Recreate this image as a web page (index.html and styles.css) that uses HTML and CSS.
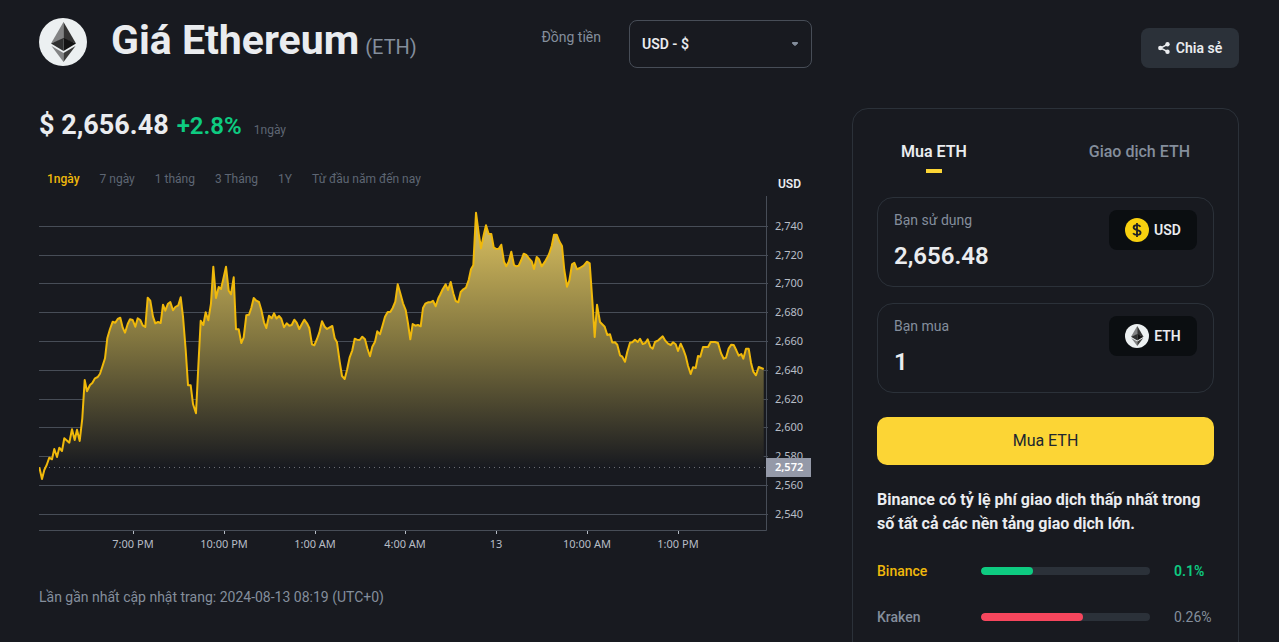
FILE: index.html
```html
<!DOCTYPE html>
<html lang="vi">
<head>
<meta charset="utf-8">
<meta name="viewport" content="width=device-width, initial-scale=1">
<title>Giá Ethereum (ETH)</title>
<link rel="stylesheet" href="styles.css">
</head>
<body>
<svg class="defs" width="0" height="0" aria-hidden="true">
  <symbol id="eth" viewBox="0 0 48 48">
    <circle cx="24" cy="24" r="24" fill="#ecf0f1"/>
    <path d="M24.5 4v17L12 25.5z" fill="#828384"/>
    <path d="M24.5 4v17L37 25.5z" fill="#343434"/>
    <path d="M24.5 20v13L12 25.5z" fill="#2f3030"/>
    <path d="M24.5 20v13L37 25.5z" fill="#131313"/>
    <path d="M12.5 28l12 16v-9z" fill="#828384"/>
    <path d="M36.500 28l-12 16v-9z" fill="#3c3c3b"/>
  </symbol>
</svg>
<div class="page">
  <header class="top">
    <div class="top-main">
      <svg class="logo" aria-hidden="true"><use href="#eth"/></svg>
      <h1 class="title">Giá Ethereum<span class="ticker">(ETH)</span></h1>
      <div class="currency">
        <label class="currency-label" for="currency">Đồng tiền</label>
        <div class="select-wrap">
          <select class="select" id="currency"><option>USD - $</option></select>
          <svg class="caret" viewBox="0 0 8 6" aria-hidden="true"><path d="M1.500 1.500h5v1L4 4.500l-2.500-2z" fill="#848e9c" stroke="#848e9c" stroke-linejoin="round"/></svg>
        </div>
      </div>
    </div>
    <button class="share" type="button">
      <svg class="share-icon" viewBox="0 0 12 12" aria-hidden="true">
        <path d="M9.500 2.300L2.500 6l7 3.700" fill="none" stroke="#eaecef" stroke-width="1.500"/>
        <circle cx="9.500" cy="2.300" r="2.200" fill="#eaecef"/><circle cx="2.300" cy="6" r="2.200" fill="#eaecef"/><circle cx="9.500" cy="9.700" r="2.200" fill="#eaecef"/>
      </svg>
      Chia sẻ
    </button>
  </header>

  <div class="columns">
    <main class="market">
      <div class="price-row">
        <span class="price">$ 2,656.48</span>
        <span class="change">+2.8%</span>
        <span class="period">1ngày</span>
      </div>
      <div class="range-row">
        <nav class="ranges">
          <button class="range active" type="button">1ngày</button>
          <button class="range" type="button">7 ngày</button>
          <button class="range" type="button">1 tháng</button>
          <button class="range" type="button">3 Tháng</button>
          <button class="range" type="button">1Y</button>
          <button class="range" type="button">Từ đầu năm đến nay</button>
        </nav>
        <span class="unit">USD</span>
      </div>
      <svg class="chart" viewBox="39 196 773 360" role="img" aria-label="Giá Ethereum trong 1 ngày">
        <defs>
          <linearGradient id="fill" gradientUnits="userSpaceOnUse" x1="0" y1="212" x2="0" y2="467">
            <stop offset="0" stop-color="#e0c562"/><stop offset="0.500" stop-color="#81753f"/><stop offset="1" stop-color="#181a20"/>
          </linearGradient>
        </defs>
        <path class="grid" d="M39 226.500H768M39 255.500H768M39 283.500H768M39 312.500H768M39 341.500H768M39 370.500H768M39 399.500H768M39 427.500H768M39 456.500H768M39 485.500H768M39 514.500H768M39 530.500H766.500V196"/>
        <path id="area" fill="url(#fill)"/>
        <path class="base" d="M39 467.500H766"/>
        <path id="line" class="line" d="M39.300 467.300L42 479 44.300 470 46.700 465 49.300 457.700 52 459.300 54.300 449 57 457 59.300 447.700 62 451 64.300 438.300 69.300 442.700 72 429.300 74.700 440 77 429.700 79.700 441 82.300 418.300 84.700 380 87 391.300 90 385 92.300 383 95 378.300 97.700 377 100 373.700 102.300 366.700 105 358.300 107.300 338.300 110 329 112.700 321.700 115.300 322.700 117.700 319 120.300 317.700 122.700 327.700 125 332.700 127.700 324 130 319.300 132.700 320 135.300 326.700 137.700 318.300 140.300 320 142.700 325.300 145.300 327 147.700 297.700 150.300 300.700 153 316.700 155.300 323.300 158 322 160.700 323 163 304.700 165.300 310.700 168 303.700 170.300 302 173 310.300 175.300 307 178.300 305.300 180.700 297.300 183 316.700 185.700 350 188 385.300 190.700 385.300 193 404 196 413.300 198.300 366.700 200.700 320.700 203.300 325 205.700 312.300 208.300 320.300 211 303.300 213.300 266.700 216 298 218.700 287 221 289 223.300 279 226 266.700 228.700 290.700 231 294.300 233.700 277.300 236 329.300 238.700 329.300 241.300 343 243.700 337.300 246.300 315.300 249 314.700 251.300 308 253.700 298 256.300 300.700 259 302 261.300 309.700 264 322.300 266.300 328 269 315.700 271.700 318.300 274 313.300 276.500 318.500 279 316 281.300 318.700 284 327.300 286.700 323.300 289.300 325.700 291.700 325 294.300 319.700 296.700 322.700 299.300 329 302 323.700 304.300 319.700 307 323.300 309.300 328 312 344.300 314.300 345.300 317 339 319.300 332.700 322 321.300 324.700 326.700 327 329 329.700 327.300 332.300 326 334.700 338.300 337 342.300 339.700 361.700 342 376 344.700 379 347 370 349.700 357.300 352.300 350.300 354.700 338.700 357 339.700 359.700 340 362.300 336.700 365 339.300 367.300 348.300 370 356.300 372.300 346.700 375 341.700 377.300 331.300 380 334.300 382.700 325 385 316.700 387.700 312 390.300 312 392.700 308 395.300 301.700 397.700 284.300 400.300 293.300 403 303.300 405.700 310 408 323.300 410.300 339.300 412.700 324 415.300 325.700 418 325 420.700 326.300 423 308 425.300 303.700 428 302.300 430.700 302.300 433 300.700 435.700 306.300 438.300 298.300 440 295 442.700 289.300 445.700 284.300 448 290 450.700 282 453.300 293.300 455.700 301 458.300 302.300 460.700 292 463.300 289.300 466 287.700 468.700 280 471 269.300 473.300 265.300 476 212.700 478.700 233.300 481 248.300 483.700 235 486 225.300 488.700 234 491.300 234 493.700 247.300 496.300 249 498.700 248.700 501.300 244.700 504 261.700 506.300 266.300 508.700 261.700 511.300 251.700 514 265 516.300 266.300 518.700 265.700 521.300 260 523.700 253.700 526.300 255 529 258.300 531.700 261.300 534 269 536.700 257 539 259.300 541.700 266.300 545 261.700 549 254.300 551.700 246 554 234.700 556.700 234.700 559.300 241.300 562 246 564.300 270 567 286.700 569.300 280.700 572 264.300 574.300 262.700 577 269.300 579.700 268 583.700 265.700 587 261.700 589.700 263.300 592.300 300 594.700 337 597 304.700 600 322 604.700 326.700 607.300 335 610 334.300 612.300 342.500 615 342.300 617.300 344.700 620 355.300 622.300 356.700 625 361.700 627.300 351.700 630 342.700 632.300 342.300 635 339.700 637.700 342 640 338.700 642.700 344 645.300 343 647.700 339.300 650.300 346.700 652.700 348.700 655 342 658.300 340.300 662.700 336.300 665.300 340.700 668 343.700 670.700 345 673 342.300 675.700 344.300 678 351 680.700 343.700 683.300 349.300 685.700 356 688 365.700 690.700 374 693 367.300 695.700 368 698 356 700.300 356.700 703 347 708 347 710.700 342 715 342 718 343 721 353.300 723.700 358.700 726 357.700 728.700 348.300 731.300 344.700 733.700 345 736.300 350.300 738.700 355.700 741.300 354 743.300 358.700 746 348.700 748.700 348.700 751 362.700 753.300 371.700 756 375.300 758.700 367 763.700 369"/>
        <path class="ticks" d="M133.500 531v3M224.500 531v3M315.500 531v3M405.500 531v3M496.500 531v3M587.500 531v3M678.500 531v3"/>
        <g class="axis-text">
          <text x="775" y="230">2,740</text><text x="775" y="259">2,720</text><text x="775" y="287">2,700</text><text x="775" y="316">2,680</text><text x="775" y="345">2,660</text><text x="775" y="374">2,640</text><text x="775" y="403">2,620</text><text x="775" y="431">2,600</text><text x="775" y="460">2,580</text><text x="775" y="489">2,560</text><text x="775" y="518">2,540</text>
        </g>
        <g class="axis-text time">
          <text x="133" y="548">7:00 PM</text><text x="224" y="548">10:00 PM</text><text x="315" y="548">1:00 AM</text><text x="405" y="548">4:00 AM</text><text x="496" y="548">13</text><text x="587" y="548">10:00 AM</text><text x="678" y="548">1:00 PM</text>
        </g>
        <rect x="766" y="458" width="45" height="19" fill="#9499a8"/>
        <text class="axis-text marker" x="775" y="471">2,572</text>
      </svg>
      <p class="updated">Lần gần nhất cập nhật trang: 2024-08-13 08:19 (UTC+0)</p>
    </main>

    <aside class="trade">
      <div class="tabs">
        <button class="tab active" type="button">Mua ETH</button>
        <button class="tab" type="button">Giao dịch ETH</button>
      </div>
      <div class="field">
        <div class="field-main">
          <label class="field-label" for="spend">Bạn sử dụng</label>
          <input class="amount" id="spend" type="text" value="2,656.48">
        </div>
        <div class="coin">
          <svg class="coin-icon" viewBox="0 0 24 24" aria-hidden="true">
            <circle cx="12" cy="12" r="12" fill="#f8d00f"/>
            <path d="M15.500 8.700C14.800 7.700 13.600 7.200 12 7.200c-2 0-3.400.9-3.400 2.400 0 3.300 7 1.500 7 4.900 0 1.500-1.400 2.400-3.600 2.400-1.700 0-3.100-.6-3.900-1.700M12 5v14" fill="none" stroke="#1e2026" stroke-width="1.800"/>
          </svg>
          USD
        </div>
      </div>
      <div class="field">
        <div class="field-main">
          <label class="field-label" for="buy">Bạn mua</label>
          <input class="amount" id="buy" type="text" value="1">
        </div>
        <div class="coin">
          <svg class="coin-icon" aria-hidden="true"><use href="#eth"/></svg>
          ETH
        </div>
      </div>
      <button class="buy" type="button">Mua ETH</button>
      <h2 class="fees-title">Binance có tỷ lệ phí giao dịch thấp nhất trong số tất cả các nền tảng giao dịch lớn.</h2>
      <div class="fees">
        <div class="fee best"><span class="fee-name">Binance</span><span class="bar"><span class="bar-fill" style="width:31%"></span></span><span class="fee-rate">0.1%</span></div>
        <div class="fee"><span class="fee-name">Kraken</span><span class="bar"><span class="bar-fill" style="width:60.500%"></span></span><span class="fee-rate">0.26%</span></div>
      </div>
    </aside>
  </div>
</div>
<script src="chart.js"></script>
</body>
</html>
```
FILE: chart.js
```js
// Close the price line down to the opening price to shade the area below it.
const line = document.getElementById("line").getAttribute("d");
document.getElementById("area").setAttribute("d", line + "V467H39z");
```
FILE: styles.css
```css
* { box-sizing: border-box; }
html { background: #181a20; overflow: hidden; }
body { margin: 0; color: #eaecef; font-family: Roboto, "Noto Sans", sans-serif; font-size: 14px; line-height: 20px; }
button, input, select { font: inherit; color: inherit; background: none; border: 0; padding: 0; margin: 0; }
button { cursor: pointer; }
h1, h2, p { margin: 0; }
.defs { position: absolute; }
.page { padding: 16px 40px 0 39px; }

.top { display: grid; grid-template-columns: 1fr 387px; column-gap: 40px; }
.top-main { display: flex; align-items: flex-start; }
.logo { width: 48px; height: 48px; margin: 2px 24px 0 0; flex: none; }
.title { font-size: 41px; line-height: 48px; font-weight: 700; white-space: nowrap; }
.ticker { font-size: 20px; line-height: 20px; font-weight: 400; color: #848e9c; margin-left: 6px; }
.currency { display: flex; margin: 4px 0 0 auto; gap: 28px; }
.currency-label { color: #848e9c; padding-top: 7px; }
.select-wrap { position: relative; }
.select { appearance: none; width: 183px; height: 48px; padding: 0 12px; border: 1px solid #474d57; border-radius: 8px; font-weight: 600; }
.caret { position: absolute; right: 13px; top: 21px; width: 8px; height: 6px; pointer-events: none; }
.share { justify-self: end; display: flex; align-items: center; justify-content: center; gap: 6px; width: 98px; height: 40px; margin-top: 12px; border-radius: 8px; background: #2b3139; font-weight: 600; white-space: nowrap; }
.share-icon { width: 12px; height: 12px; }

.columns { display: grid; grid-template-columns: 1fr 387px; column-gap: 40px; align-items: start; margin-top: 40px; }
.price-row { display: flex; align-items: baseline; height: 36px; line-height: 34px; white-space: nowrap; }
.price { font-size: 27px; font-weight: 700; }
.change { font-size: 24px; font-weight: 600; color: #0ecb81; margin-left: 8px; }
.period { font-size: 12px; color: #5e6673; margin-left: 12px; }
.range-row { display: flex; justify-content: space-between; align-items: flex-end; margin-top: 24px; height: 28px; }
.ranges { display: flex; gap: 20px; padding-left: 8px; align-self: flex-start; }
.range { font-size: 12px; line-height: 22px; color: #5e6673; white-space: nowrap; }
.range.active { color: #f0b90b; font-weight: 500; }
.unit { font-size: 12px; font-weight: 600; padding-right: 11px; line-height: 24px; }
.chart { display: block; width: 100%; height: auto; }
.grid { fill: none; stroke: #474d57; }
.base { fill: none; stroke: #6b6e76; stroke-dasharray: 1 4; }
.line { fill: none; stroke: #f0b90b; stroke-width: 2; stroke-linejoin: round; }
.ticks { stroke: #b7bdc6; }
.axis-text { fill: #b7bdc6; font-family: "Noto Sans", sans-serif; font-size: 11px; }
.time { text-anchor: middle; }
.marker { fill: #fff; font-weight: 600; }
.updated { color: #848e9c; margin-top: 31px; }

.trade { border: 1px solid #2b3139; border-radius: 16px; padding: 24px; min-height: 560px; }
.tabs { display: flex; justify-content: space-between; padding: 0 24px; }
.tab { position: relative; font-size: 16px; line-height: 24px; font-weight: 500; color: #848e9c; padding: 7px 0 9px; }
.tab.active { color: #eaecef; font-weight: 600; }
.tab.active::after { content: ""; position: absolute; left: calc(50% - 8px); bottom: 0; width: 16px; height: 4px; background: #fcd535; }
.field { display: flex; justify-content: space-between; height: 90px; margin-top: 16px; padding: 12px 16px; border: 1px solid #2b3139; border-radius: 16px; }
.tabs + .field { margin-top: 24px; }
.field-main { flex: 1; min-width: 0; }
.field-label { display: block; color: #848e9c; }
.amount { display: block; width: 100%; height: 32px; margin-top: 10px; font-size: 24px; line-height: 32px; font-weight: 600; }
.coin { display: flex; align-items: center; justify-content: center; gap: 5px; width: 88px; height: 40px; border-radius: 8px; background: #0b0e11; font-weight: 600; }
.coin-icon { width: 24px; height: 24px; }
.buy { display: block; width: 100%; height: 48px; margin-top: 24px; border-radius: 10px; background: #fcd535; color: #202630; font-size: 16px; }
.fees-title { font-size: 16px; line-height: 24px; font-weight: 700; margin-top: 23px; }
.fees { display: grid; row-gap: 26px; margin-top: 25px; }
.fee { display: grid; grid-template-columns: 80px 1fr 40px; column-gap: 24px; align-items: center; color: #848e9c; }
.fee-name { font-weight: 500; }
.bar { height: 8px; border-radius: 4px; background: #2b3139; overflow: hidden; }
.bar-fill { display: block; height: 8px; border-radius: 4px; background: #f6465d; }
.best .fee-name { color: #f0b90b; }
.best .bar-fill { background: #0ecb81; }
.best .fee-rate { color: #0ecb81; font-weight: 600; }
```
